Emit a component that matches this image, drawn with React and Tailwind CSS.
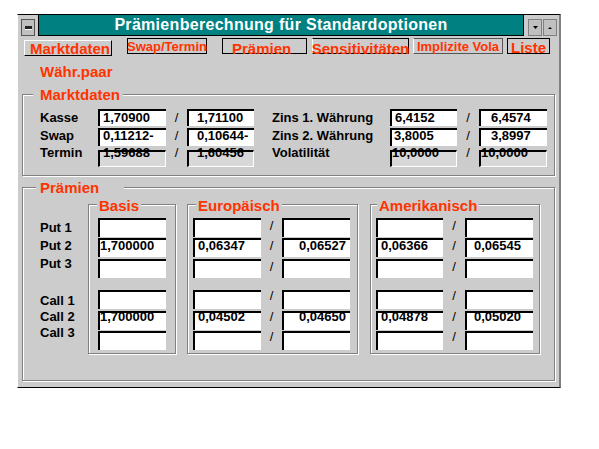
const RED = "text-[#ff3300]";

function Group({ title, cls, legendCls, children }) {
  return (
    <div className={`relative border border-[#808080] shadow-[inset_1px_1px_0_#fff,1px_1px_0_#fff] ${cls}`}>
      <span className={`absolute bg-[#cccccc] text-[15px] font-bold leading-none whitespace-nowrap ${RED} ${legendCls}`}>
        {title}
      </span>
      {children}
    </div>
  );
}

function Box({ w, value, pad, txt, disabled }) {
  return (
    <div
      className={`${w} h-full border-t-2 border-l-2 border-t-black border-l-black ${
        disabled ? "border-r border-b border-r-white border-b-white bg-[#d8d8d8]" : "bg-white"
      }`}
    >
      <div className={`whitespace-nowrap leading-[12px] ${pad} ${txt}`}>{value}</div>
    </div>
  );
}

function Slash({ w, txt }) {
  return (
    <div className={`${w} flex justify-center pt-[2px]`}>
      <span className={`block font-normal leading-[12px] ${txt}`}>/</span>
    </div>
  );
}

const marketRows = [
  {
    label: "Kasse",
    v1: "1,70900",
    v2: "1,71100",
    label2: "Zins 1. Währung",
    v3: "6,4152",
    v4: "6,4574",
    row: "mt-[14px] h-[17px]",
    lbl: "pt-[3px]",
    txt: "pt-[1px]",
    p3: "pl-[3px]",
    p4: "pl-[10px]",
  },
  {
    label: "Swap",
    v1: "0,11212-",
    v2: "0,10644-",
    label2: "Zins 2. Währung",
    v3: "3,8005",
    v4: "3,8997",
    row: "mt-[2px] h-[18px]",
    lbl: "pt-[2px]",
    txt: "pt-0",
    p3: "pl-[2px]",
    p4: "pl-[10px]",
  },
  {
    label: "Termin",
    v1: "1,59688",
    v2: "1,60456",
    label2: "Volatilität",
    v3: "10,0000",
    v4: "10,0000",
    row: "mt-[4px] h-[17px]",
    lbl: "-mt-[3px]",
    txt: "-mt-[5px]",
    p3: "pl-0",
    p4: "pl-0",
    disabled: true,
  },
];

const premRows = [
  { b: "", e1: "", e2: "", a1: "", a2: "", mt: "mt-[13px]", t: "" },
  { b: "1,700000", e1: "0,06347", e2: "0,06527", a1: "0,06366", a2: "0,06545", mt: "mt-[1px]", t: "" },
  { b: "", e1: "", e2: "", a1: "", a2: "", mt: "mt-[2px]", t: "" },
  { b: "", e1: "", e2: "", a1: "", a2: "", mt: "mt-[12px]", t: "-mt-[2px]" },
  { b: "1,700000", e1: "0,04502", e2: "0,04650", a1: "0,04878", a2: "0,05020", mt: "mt-[2px]", t: "-mt-[2px]" },
  { b: "", e1: "", e2: "", a1: "", a2: "", mt: "mt-[1px]", t: "-mt-[2px]" },
];

export default function App() {
  return (
    <div className="min-h-screen bg-white pt-[14px] pl-[17px] font-['Liberation_Sans',Arial,sans-serif]">
      <div className="flex h-[374px] w-[544px] flex-col border-t border-b border-l border-r-2 border-t-black border-b-black border-l-white border-r-[#808080] bg-[#cccccc]">
        {/* title bar */}
        <div className="flex h-[21px] items-start">
          <div className="ml-[3px] mt-[4px] flex h-[17px] w-[14px] items-center justify-center border border-[#555] bg-[#c0c0c0]">
            <div className="h-[3px] w-[7px] bg-[#222] shadow-[0_1px_0_#fff]" />
          </div>
          <div className="ml-[3px] flex h-[21px] w-[486px] items-center justify-center border-x border-b border-black bg-[#008080] text-[16px] font-bold tracking-[0.3px] text-white">
            Prämienberechnung für Standardoptionen
          </div>
          <div className="ml-[4px] mt-[4px] flex h-[17px] w-[14px] items-center justify-center border border-[#808080] bg-[#c0c0c0]">
            <svg width="5" height="3" viewBox="0 0 5 3">
              <path d="M0 0h5L2.5 3z" fill="#000" />
            </svg>
          </div>
          <div className="ml-[1px] mt-[4px] flex h-[17px] w-[14px] items-center justify-center border border-[#808080] bg-[#c0c0c0]">
            <svg width="4" height="2" viewBox="0 0 4 2">
              <path d="M2 0L4 2H0z" fill="#000" />
            </svg>
          </div>
        </div>

        {/* tabs */}
        <div className={`mt-[2px] flex h-[18px] items-start font-bold leading-none ${RED}`}>
          <div className="ml-[6px] mt-[2px] h-[16px] w-[88px] whitespace-nowrap border border-t-white border-l-white border-r-black border-b-black pl-[5px] text-[15px]">
            Marktdaten
          </div>
          <div className="ml-[15px] flex h-[16px] w-[80px] justify-center whitespace-nowrap border border-black pt-[1px] text-[13px]">
            Swap/Termin
          </div>
          <div className="ml-[15px] h-[16px] w-[85px] whitespace-nowrap border border-black pl-[9px] pt-[2px] text-[15px]">
            Prämien
          </div>
          <div className="ml-[5px] flex h-[16px] w-[97px] justify-center whitespace-nowrap border border-black border-l-white pt-[2px] text-[15px]">
            Sensitivitäten
          </div>
          <div className="ml-[4px] flex h-[16px] w-[90px] justify-center whitespace-nowrap border border-[#555] border-l-white pt-[1px] text-[13px]">
            Implizite Vola
          </div>
          <div className="ml-[4px] flex h-[16px] w-[43px] justify-center whitespace-nowrap border border-black pt-[1px] text-[15px]">
            Liste
          </div>
        </div>

        <div className={`ml-[22px] mt-[8px] text-[15px] font-bold leading-none ${RED}`}>Währ.paar</div>

        {/* Marktdaten */}
        <Group
          title="Marktdaten"
          cls="ml-[4px] mt-[15px] flex h-[82px] w-[533px] flex-col pl-[17px]"
          legendCls="left-[10px] -top-[8px] pl-[7px] pr-[3px]"
        >
          {marketRows.map((r) => (
            <div key={r.label} className={`flex items-start text-[13px] font-bold text-black ${r.row}`}>
              <div className={`w-[58px] leading-[12px] ${r.lbl}`}>{r.label}</div>
              <Box w="w-[68px]" value={r.v1} pad="pl-[3px]" txt={r.txt} disabled={r.disabled} />
              <Slash w="w-[21px]" txt={r.txt} />
              <Box w="w-[67px]" value={r.v2} pad="pl-[8px]" txt={r.txt} disabled={r.disabled} />
              <div className={`ml-[18px] w-[118px] whitespace-nowrap leading-[12px] ${r.lbl}`}>{r.label2}</div>
              <Box w="w-[67px]" value={r.v3} pad={r.p3} txt={r.txt} disabled={r.disabled} />
              <Slash w="w-[22px]" txt={r.txt} />
              <Box w="w-[68px]" value={r.v4} pad={r.p4} txt={r.txt} disabled={r.disabled} />
            </div>
          ))}
        </Group>

        {/* Prämien */}
        <Group
          title="Prämien"
          cls="ml-[4px] mt-[11px] flex h-[194px] w-[533px] items-start pl-[17px]"
          legendCls="left-[13px] -top-[8px] pl-[4px] pr-[25px]"
        >
          <div className="w-[48px] text-[13px] font-bold text-black">
            <div className="mt-[31px] leading-[18px]">
              <div>Put 1</div>
              <div>Put 2</div>
              <div>Put 3</div>
            </div>
            <div className="mt-[20px] leading-[16px]">
              <div>Call 1</div>
              <div>Call 2</div>
              <div>Call 3</div>
            </div>
          </div>

          <Group
            title="Basis"
            cls="mt-[16px] flex h-[150px] w-[88px] flex-col pl-[9px] text-[13px] font-bold text-black"
            legendCls="left-[8px] -top-[7px] px-[2px]"
          >
            {premRows.map((r, i) => (
              <div key={i} className={`flex h-[19px] ${r.mt}`}>
                <Box w="w-[68px]" value={r.b} pad="pl-0" txt={r.t} />
              </div>
            ))}
          </Group>

          <Group
            title="Europäisch"
            cls="ml-[11px] mt-[16px] flex h-[150px] w-[171px] flex-col pl-[5px] text-[13px] font-bold text-black"
            legendCls="left-[8px] -top-[7px] px-[2px]"
          >
            {premRows.map((r, i) => (
              <div key={i} className={`flex h-[19px] ${r.mt}`}>
                <Box w="w-[68px]" value={r.e1} pad="pl-[3px]" txt={r.t} />
                <Slash w="w-[21px]" txt={r.t} />
                <Box w="w-[68px]" value={r.e2} pad="pl-[15px]" txt={r.t} />
              </div>
            ))}
          </Group>

          <Group
            title="Amerikanisch"
            cls="ml-[12px] mt-[16px] flex h-[150px] w-[170px] flex-col pl-[5px] text-[13px] font-bold text-black"
            legendCls="left-[6px] -top-[7px] px-[2px]"
          >
            {premRows.map((r, i) => (
              <div key={i} className={`flex h-[19px] ${r.mt}`}>
                <Box w="w-[67px]" value={r.a1} pad="pl-[3px]" txt={r.t} />
                <Slash w="w-[22px]" txt={r.t} />
                <Box w="w-[68px]" value={r.a2} pad="pl-[7px]" txt={r.t} />
              </div>
            ))}
          </Group>
        </Group>
      </div>
    </div>
  );
}
